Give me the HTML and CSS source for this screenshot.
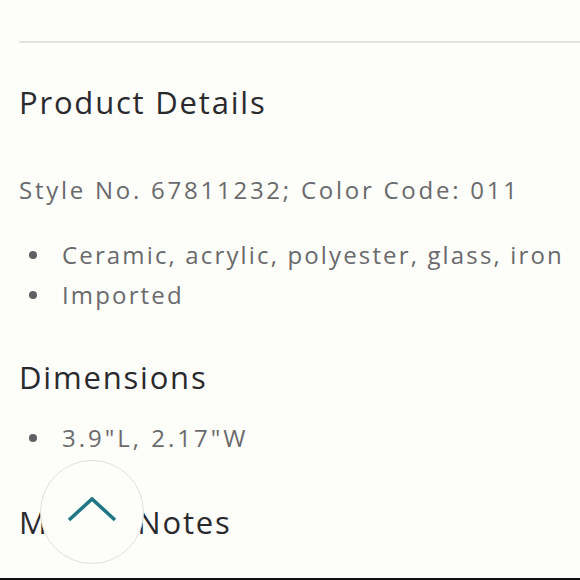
FILE: index.html
```html
<!DOCTYPE html>
<html lang="en">
<head>
<meta charset="utf-8">
<title>Product Details</title>
<link rel="stylesheet" href="styles.css">
</head>
<body>
<main class="page">
  <section class="details">
    <h2 class="heading heading-first">Product Details</h2>
    <p class="style-no">Style No. 67811232; Color Code: 011</p>
    <ul class="bullets">
      <li>Ceramic, acrylic, polyester, glass, iron</li>
      <li>Imported</li>
    </ul>
    <h2 class="heading heading-dim">Dimensions</h2>
    <ul class="bullets bullets-dim">
      <li>3.9"L, 2.17"W</li>
    </ul>
    <h2 class="heading heading-notes">Maker Notes</h2>
  </section>
</main>
<button class="to-top" type="button" aria-label="Back to top">
  <svg width="50" height="26" viewBox="0 0 50 26" aria-hidden="true">
    <polyline points="2,23 25,2 48,23" fill="none" stroke="#1f7685" stroke-width="3.6"/>
  </svg>
</button>
<div class="bottom-bar"></div>
</body>
</html>
```

FILE: styles.css
```css
html, body {
  margin: 0;
  padding: 0;
  background: #fdfdf9;
}

body {
  font-family: "Open Sans", Lato, "Noto Sans", sans-serif;
  height: 580px;
  overflow: hidden;
}

.page {
  padding-top: 41px;
  padding-left: 19px;
}

.details {
  border-top: 2px solid #e4e2de;
}

.heading {
  margin: 0;
  font-size: 31px;
  line-height: 37px;
  font-weight: 400;
  color: #2a2a2e;
  letter-spacing: 1.8px;
}

.heading-first {
  margin-top: 41px;
}

.heading-dim {
  margin-top: 44px;
}

.heading-notes {
  margin-top: 46px;
  word-spacing: 8px;
}

.style-no {
  margin: 54px 0 31px;
  font-size: 24px;
  line-height: 29px;
  color: #6a6a6c;
  letter-spacing: 2.75px;
  white-space: nowrap;
}

.bullets {
  list-style: none;
  margin: 0;
  padding: 0;
}

.bullets-dim {
  margin-top: 22px;
}

.bullets li {
  display: flex;
  align-items: center;
  font-size: 24px;
  line-height: 40px;
  color: #6a6a6c;
  letter-spacing: 2.15px;
  white-space: nowrap;
}

.bullets-dim li {
  letter-spacing: 3px;
}

.bullets li::before {
  content: "";
  width: 8px;
  height: 8px;
  border-radius: 50%;
  background: #5f5f64;
  margin-left: 10px;
  margin-right: 25px;
  flex: none;
}

.to-top {
  position: fixed;
  left: 40px;
  top: 460px;
  width: 104px;
  height: 104px;
  border-radius: 50%;
  border: 1.5px solid #e1dfdb;
  background: #fdfdf9;
  padding: 0;
  display: flex;
  align-items: center;
  justify-content: center;
}

.to-top svg {
  display: block;
  margin-top: -5px;
}

.bottom-bar {
  position: fixed;
  left: 0;
  right: 0;
  bottom: 0;
  height: 2px;
  background: #111;
}
```
